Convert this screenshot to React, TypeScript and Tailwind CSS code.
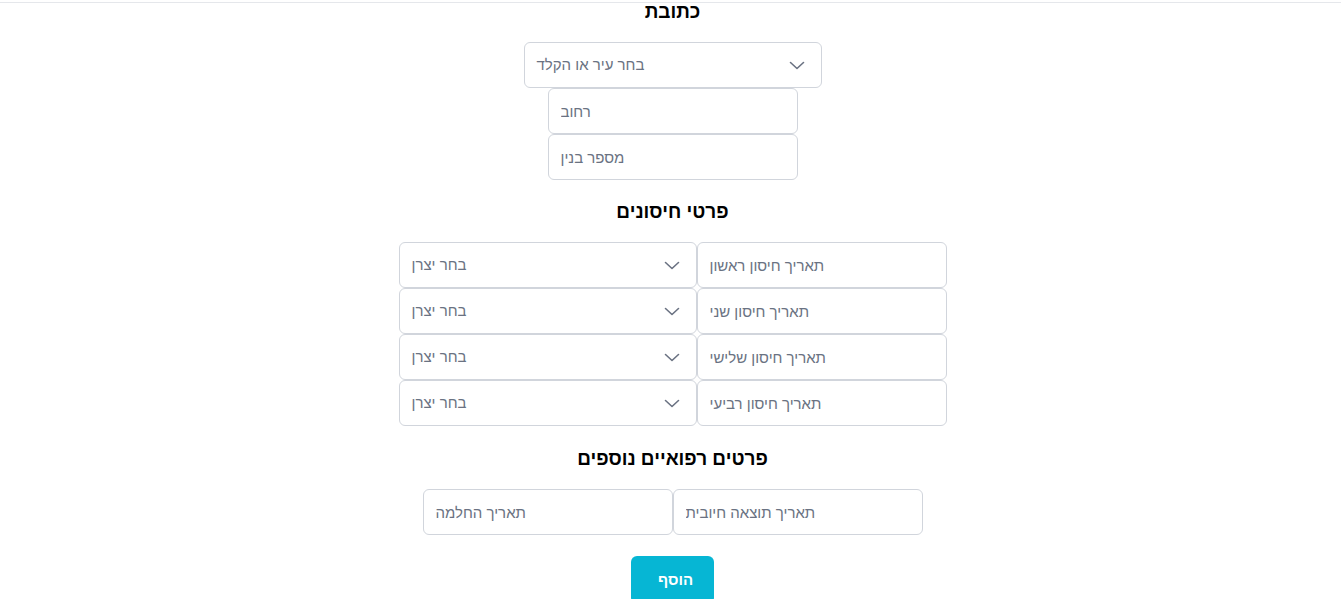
import React from "react";

function Chevron() {
  return (
    <svg width="16" height="9" viewBox="0 0 16 9" fill="none" className="text-gray-500">
      <polyline points="1.5,1.5 8,7.5 14.5,1.5" stroke="currentColor" strokeWidth="1.6" strokeLinecap="round" strokeLinejoin="round" />
    </svg>
  );
}

function SelectBox({ placeholder }: { placeholder: string }) {
  return (
    <div className="w-[298px] h-[46px] flex items-center justify-between pl-3 pr-4 border border-gray-300 rounded-md bg-white">
      <span className="text-gray-500 text-[15px]">{placeholder}</span>
      <Chevron />
    </div>
  );
}

function TextBox({ placeholder }: { placeholder: string }) {
  return (
    <input
      placeholder={placeholder}
      className="w-[250px] h-[46px] px-3 border border-gray-300 rounded-md bg-white text-[15px] placeholder:text-gray-500 outline-none"
    />
  );
}

function Heading({ children, className }: { children: React.ReactNode; className: string }) {
  return <h2 className={`text-[19px] font-bold text-black leading-7 mb-4 ${className}`}>{children}</h2>;
}

export default function App() {
  const vaccines = ["תאריך חיסון ראשון", "תאריך חיסון שני", "תאריך חיסון שלישי", "תאריך חיסון רביעי"];

  return (
    <div className="min-h-screen bg-white font-['Liberation_Sans',Arial,sans-serif] overflow-hidden">
      <div className="h-[3px] border-b border-gray-200" />
      <div className="flex flex-col items-center pl-1">
        <Heading className="-mt-[5px]">כתובת</Heading>
        <SelectBox placeholder="בחר עיר או הקלד" />
        <div className="flex flex-col">
          <TextBox placeholder="רחוב" />
          <TextBox placeholder="מספר בנין" />
        </div>

        <Heading className="mt-[18px]">פרטי חיסונים</Heading>
        <div className="flex flex-col">
          {vaccines.map((v) => (
            <div key={v} className="flex">
              <SelectBox placeholder="בחר יצרן" />
              <TextBox placeholder={v} />
            </div>
          ))}
        </div>

        <Heading className="mt-[19px]">פרטים רפואיים נוספים</Heading>
        <div className="flex">
          <TextBox placeholder="תאריך החלמה" />
          <TextBox placeholder="תאריך תוצאה חיובית" />
        </div>

        <button className="mt-[21px] h-12 w-[83px] pl-[6px] rounded-md bg-[#06b6d4] text-white font-bold text-[15px]">
          הוסף
        </button>
      </div>
    </div>
  );
}
